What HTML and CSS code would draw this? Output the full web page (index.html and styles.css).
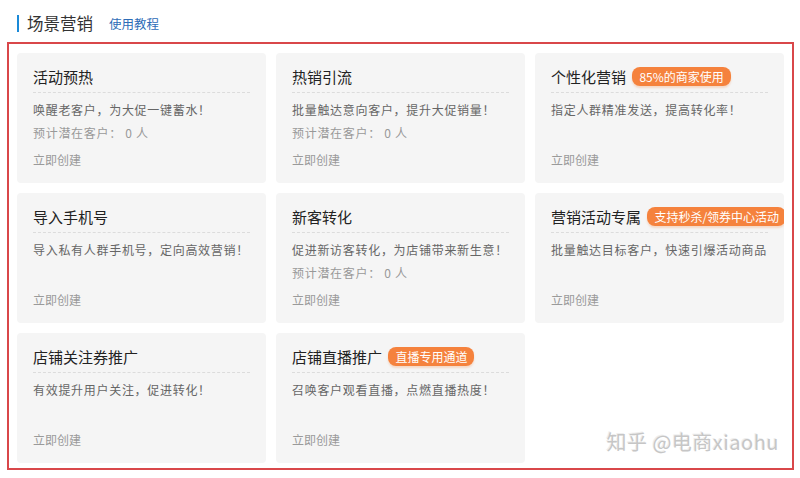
FILE: index.html
```html
<!DOCTYPE html>
<html>
<head>
<meta charset="UTF-8">
<title>场景营销</title>
<link rel="stylesheet" href="styles.css">
</head>
<body>

<div class="head">
<span class="head-title">场景营销</span>
<a class="head-link" href="#">使用教程</a>
</div>

<div class="box">

<div class="grid">

<div class="card">
<div class="title">活动预热</div>
<div class="desc">唤醒老客户，为大促一键蓄水！</div>
<div class="hint">预计潜在客户： 0 人</div>
<div class="create">立即创建</div>
</div>

<div class="card">
<div class="title">热销引流</div>
<div class="desc">批量触达意向客户，提升大促销量！</div>
<div class="hint">预计潜在客户： 0 人</div>
<div class="create">立即创建</div>
</div>

<div class="card">
<div class="title">个性化营销 <span class="tag">85%的商家使用</span></div>
<div class="desc">指定人群精准发送，提高转化率！</div>
<div class="create">立即创建</div>
</div>

<div class="card">
<div class="title">导入手机号</div>
<div class="desc">导入私有人群手机号，定向高效营销！</div>
<div class="create">立即创建</div>
</div>

<div class="card">
<div class="title">新客转化</div>
<div class="desc">促进新访客转化，为店铺带来新生意！</div>
<div class="hint">预计潜在客户： 0 人</div>
<div class="create">立即创建</div>
</div>

<div class="card">
<div class="title">营销活动专属 <span class="tag">支持秒杀/领券中心活动</span></div>
<div class="desc">批量触达目标客户，快速引爆活动商品</div>
<div class="create">立即创建</div>
</div>

<div class="card">
<div class="title">店铺关注券推广</div>
<div class="desc">有效提升用户关注，促进转化！</div>
<div class="create">立即创建</div>
</div>

<div class="card">
<div class="title">店铺直播推广 <span class="tag">直播专用通道</span></div>
<div class="desc">召唤客户观看直播，点燃直播热度！</div>
<div class="create">立即创建</div>
</div>

</div>

<div class="mark">知乎 @电商xiaohu</div>

</div>

</body>
</html>
```

FILE: styles.css
```css
body{
    margin:0;
    background:#fff;
    font-family:"Noto Sans CJK SC", "Liberation Sans", sans-serif;
    color:#333;
}

.head{
    display:flex;
    align-items:center;
    height:17px;
    margin:15px 0 10px 17px;
    border-left:2px solid #1a8ad8;
    padding-left:8px;
}

.head-title{
    font-size:16.5px;
    line-height:17px;
    color:#333;
}

.head-link{
    font-size:12.5px;
    line-height:17px;
    color:#2d6cb7;
    text-decoration:none;
    margin-left:16px;
}

.box{
    position:relative;
    margin:0 6px 0 7px;
    border:2px solid #d9474a;
    padding:9px 8px 5px 8px;
    height:410px;
}

.grid{
    display:grid;
    grid-template-columns:repeat(3, 249px);
    grid-auto-rows:130px;
    gap:10px;
}

.card{
    background:#f5f5f5;
    border-radius:4px;
    padding:14px 16px 14px 16px;
    display:flex;
    flex-direction:column;
    overflow:hidden;
}

.title{
    font-size:15px;
    line-height:20px;
    color:#222;
    white-space:nowrap;
    width:217px;
    padding-bottom:5px;
    border-bottom:1px dashed #dcdcdc;
    margin-bottom:8px;
}

.tag{
    display:inline-block;
    background:#f5823d;
    color:#fff;
    font-size:12px;
    line-height:19px;
    height:19px;
    padding:0 7px;
    border-radius:8px;
    margin-left:3px;
    vertical-align:top;
    box-shadow:0 2px 2px rgba(245,130,61,0.25);
}

.desc{
    font-size:12px;
    line-height:18px;
    color:#666;
    white-space:nowrap;
    letter-spacing:0.7px;
}

.hint{
    font-size:12px;
    line-height:18px;
    color:#999;
    margin-top:5px;
    letter-spacing:0.7px;
}

.create{
    font-size:12px;
    line-height:18px;
    color:#9a9a9a;
    margin-top:auto;
}

.mark{
    position:absolute;
    right:13px;
    bottom:12px;
    font-size:20px;
    color:#c6c6c6;
    text-shadow:1px 1px 0 #fff, -1px -1px 0 #eee;
    letter-spacing:0.5px;
}
```
